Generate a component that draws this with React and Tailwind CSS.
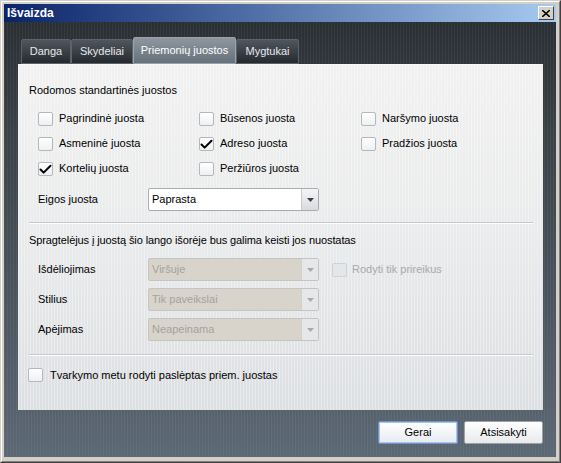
import { Check } from 'lucide-react';

const tabs = [
  { label: 'Danga', w: 'w-[50px]' },
  { label: 'Skydeliai', w: 'w-[62px]' },
  { label: 'Priemonių juostos', w: 'w-[103px]', active: true },
  { label: 'Mygtukai', w: 'w-[63px]' },
];

const toolbars = [
  { label: 'Pagrindinė juosta' },
  { label: 'Būsenos juosta' },
  { label: 'Naršymo juosta' },
  { label: 'Asmeninė juosta' },
  { label: 'Adreso juosta', checked: true },
  { label: 'Pradžios juosta' },
  { label: 'Kortelių juosta', checked: true },
  { label: 'Peržiūros juosta' },
];

function Checkbox({ checked, disabled }) {
  return (
    <span
      className={`relative inline-block w-[15px] h-[14px] rounded-[2px] border shrink-0 ${
        disabled
          ? 'border-[#cfd3d8] bg-[#e4e7ea]'
          : 'border-[#b4b8bc] bg-[linear-gradient(#ffffff,#eef0f2)]'
      }`}
    >
      {checked && (
        <Check className="absolute -left-[1px] -top-[1px] w-[15px] h-[15px] text-black" strokeWidth={3.2} />
      )}
    </span>
  );
}

function Select({ value, disabled }) {
  return (
    <div
      className={`flex w-[171px] h-[23px] rounded-[2px] border ${
        disabled ? 'border-[#c4c4c0] bg-[#d9d4cb]' : 'border-[#a8acb0] bg-white'
      }`}
    >
      <span className={`flex-1 pl-[3px] leading-[21px] ${disabled ? 'text-[#a4a29e]' : 'text-black'}`}>{value}</span>
      <span
        className={`w-[17px] flex items-center justify-center border-l ${
          disabled ? 'border-[#d0d0cc] bg-[#e6e7e8]' : 'border-[#c8ccd0] bg-[linear-gradient(#f4f5f6,#d8dbde)]'
        }`}
      >
        <svg width="7" height="4" viewBox="0 0 7 4">
          <path d="M0 0h7L3.5 4z" fill={disabled ? '#a8abae' : '#3c4044'} />
        </svg>
      </span>
    </div>
  );
}

function Separator() {
  return <div className="h-[2px] mr-[10px] border-t border-[#c4c9ce] bg-white" />;
}

export default function App() {
  return (
    <div className="w-[561px] h-[463px] border border-t-[#d4d0c8] border-l-[#d4d0c8] border-b-[#404040] border-r-[#404040] font-['Liberation_Sans',sans-serif] text-[11px] text-black">
      <div className="h-full flex flex-col border border-t-white border-l-white border-b-[#808080] border-r-[#808080] bg-[#d4d0c8] pt-[2px] pl-[2px] pr-[3px] pb-[4px]">
        {/* title bar */}
        <div className="h-[18px] flex items-center justify-between pl-[3px] pr-[2px] bg-[linear-gradient(90deg,#0a246a,#a6caf0)]">
          <span className="text-white font-bold text-[12px] leading-[18px]">Išvaizda</span>
          <button className="w-[16px] h-[14px] flex items-center justify-center bg-[#d4d0c8] border border-t-white border-l-white border-b-[#404040] border-r-[#404040]">
            <svg width="8" height="7" viewBox="0 0 8 7">
              <path d="M0 0l8 7M8 0L0 7" stroke="#000" strokeWidth="1.6" />
            </svg>
          </button>
        </div>

        {/* dialog body */}
        <div className="flex-1 flex flex-col pt-[15px] pl-[14px] pr-[13px] pb-[12px] bg-[repeating-linear-gradient(90deg,rgba(255,255,255,0.05)_0_1px,transparent_1px_3px),linear-gradient(#2a2f34,#3a4147_25%,#5b6773)]">
          <div className="flex items-end h-[27px] pl-[3px]">
            {tabs.map((tab) => (
              <div
                key={tab.label}
                className={`${tab.w} flex items-center justify-center border rounded-t-[2px] ${
                  tab.active
                    ? 'h-[27px] border-[#9aa3ab] bg-[linear-gradient(#8e979f,#66717b)] text-white'
                    : 'h-[25px] border-[#5c636a] bg-[linear-gradient(#4f565d,#252a2f)] text-[#e6e9ec]'
                }`}
              >
                {tab.label}
              </div>
            ))}
          </div>

          <div className="h-[346px] flex flex-col pl-[11px] border-t border-[#f8f8f8] bg-[repeating-linear-gradient(90deg,rgba(255,255,255,0.35)_0_1px,transparent_1px_3px),linear-gradient(#f1f1f1,#e9eaeb_50%,#dcdfe2)]">
            <div className="mt-[18px] h-[14px] leading-[14px]">Rodomos standartinės juostos</div>

            <div className="mt-[9px] ml-[9px] grid grid-cols-[161px_162px_auto]">
              {toolbars.map((t) => (
                <label key={t.label} className="h-[25px] flex items-center gap-[6px]">
                  <Checkbox checked={t.checked} />
                  <span>{t.label}</span>
                </label>
              ))}
            </div>

            <div className="mt-[7px] ml-[9px] flex items-center">
              <span className="w-[110px]">Eigos juosta</span>
              <Select value="Paprasta" />
            </div>

            <div className="mt-[11px]">
              <Separator />
            </div>

            <div className="mt-[9px] h-[14px] leading-[14px] tracking-[-0.1px]">
              Spragtelėjus į juostą šio lango išorėje bus galima keisti jos nuostatas
            </div>

            <div className="mt-[11px] ml-[9px] flex flex-col gap-[7px]">
              <div className="flex items-center">
                <span className="w-[110px]">Išdėliojimas</span>
                <Select value="Viršuje" disabled />
                <span className="ml-[13px] flex items-center gap-[5px] text-[#a6aaae]">
                  <Checkbox disabled />
                  Rodyti tik prireikus
                </span>
              </div>
              <div className="flex items-center">
                <span className="w-[110px]">Stilius</span>
                <Select value="Tik paveikslai" disabled />
              </div>
              <div className="flex items-center">
                <span className="w-[110px]">Apėjimas</span>
                <Select value="Neapeinama" disabled />
              </div>
            </div>

            <div className="mt-[13px]">
              <Separator />
            </div>

            <label className="mt-[11px] -ml-[1px] flex items-center gap-[7px]">
              <Checkbox />
              <span>Tvarkymo metu rodyti paslėptas priem. juostas</span>
            </label>
          </div>

          <div className="mt-[11px] flex justify-end gap-[6px]">
            <button className="w-[80px] h-[23px] rounded-[2px] border border-[#6f95c8] shadow-[inset_0_0_0_1px_#a9c4e8] bg-[linear-gradient(#ffffff,#e6ebf1)]">
              Gerai
            </button>
            <button className="w-[79px] h-[23px] rounded-[2px] border border-[#9ca2a8] bg-[linear-gradient(#ffffff,#e8eaec)]">
              Atsisakyti
            </button>
          </div>
        </div>
      </div>
    </div>
  );
}
